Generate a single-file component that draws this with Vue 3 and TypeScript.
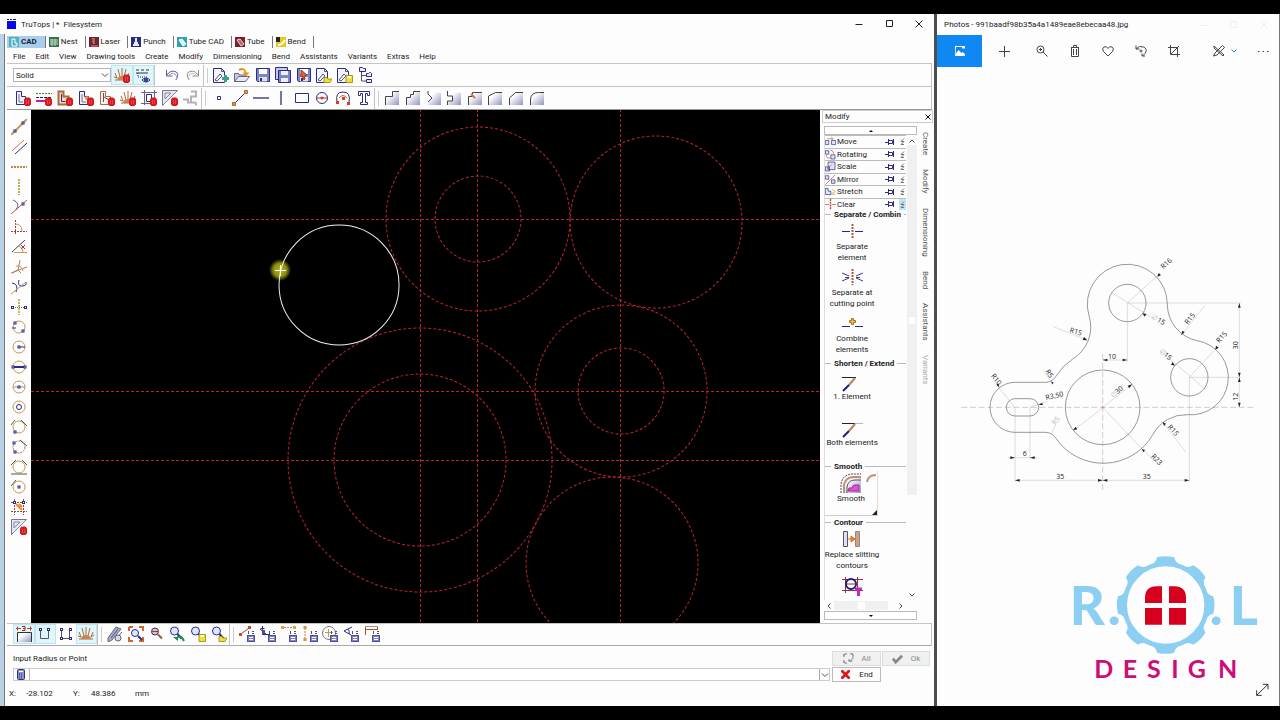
<script setup lang="ts">
import { ref } from 'vue'

interface Tool {
  id: string
  label: string
  on?: boolean
}

const NAVY = '#2c2c86'
const BROWN = '#b06a3c'
const GOLD = '#c89a50'

const bin =
  '<path d="M9.500 9.500l1-1.500h4l1 1.500v5l-1 1h-4l-1-1z" fill="#dc1a20" stroke="#c81c20"/><path d="M11.500 10v4M13.500 10v4" stroke="#e84448"/>'
const calc =
  '<path d="M9.500 5v3M13 5.500h2M13 7.500h2" stroke="#555"/><rect x="8.500" y="9.500" width="7" height="6" fill="#7c84cc" stroke="#4a4e9c"/><path d="M10 11.500h4M10 13.500h4" stroke="#fff"/>'
const sheet = '<path d="M.5 1.500h8l3 3v11H.5z" fill="#f4f6ff"/><path d="M8.500 1.500v3h3M2 13l5-6 2 2-5 5z" stroke="#556"/>'
const disk =
  '<path d="M1.500 1.500h13v13h-12l-1-1z" fill="#7d86c4"/><path d="M4 2h8v5H4z" fill="#fff" stroke="none"/><path d="M4 10h8v4.500H4z" fill="#dfe2f4" stroke="none"/><path d="M6 11v3" stroke-width="2"/>'
const sun =
  '<path d="M1 13h14M3 11L1 6M6 10L4 2M8 10V1M10 10l2-8M13 11l2-5M0 10l3 1M16 9l-3 2" stroke="#b06a3c"/><path d="M3 13a5 4 0 0 1 10 0z" fill="#c98355" stroke="none"/>'
const lens = '<circle cx="5.500" cy="5" r="4" fill="#dfe6ff"/><path d="M8.500 8l4 4.500" stroke-width="2"/>'
const yellowSave =
  '<path d="M9 8.500h6.500v7H9z" fill="#f0e030" stroke="#a89a18"/><path d="M10.500 9h3.500v2h-3.500z" fill="#fff" stroke="none"/>'
const yellowFolder = '<path d="M8 15.500v-5h3l1 1.500h4l-2 3.500z" fill="#f0e030" stroke="#a89a18"/>'
const profile = '<path d="M1.500 1.500h5v5h4v8h-9z" fill="#f2f2fa"/><path d="M4 4v8h4" stroke="#777"/>'
const ring = `<circle cx="8" cy="8" r="6" stroke="${GOLD}"/>`
const sq = (x: number, y: number) =>
  `<rect x="${x - 1}" y="${y - 1}" width="2" height="2" fill="#fff" stroke="${NAVY}"/>`
const chamfer = (d: string, close: string) =>
  `<path d="${d}${close}" fill="url(#plate)" stroke="none"/><path d="${d}" stroke="#444"/>`

const icons: Record<string, string> = {
  sunDel: sun + bin,
  sun,
  layers:
    '<path d="M1 3h3M6 3h3M11 3h3M1 6h12" stroke="#333"/><path d="M3 6v4h10" stroke-dasharray="1 1"/><path d="M7 13q4-4 8 0q-4 4-8 0z" fill="#fff"/><circle cx="11" cy="13" r="1.500" fill="#2c50b0"/>',
  undo: '<path d="M2.500 3v6h6M3 8q3-5 8-3.500t1 8.500" stroke="#5a5a9c"/><path d="M5 8q3-3 6-1t1 6" stroke="#9a9ac4"/>',
  redo: '<path d="M13.500 3v6h-6M13 8q-3-5-8-3.500t-1 8.500" stroke="#8c8c94"/><path d="M11 8q-3-3-6-1t-1 6" stroke="#c0c0c8"/>',
  newDoc: sheet + '<path d="M12.500 8v7M9 11.500h7" stroke="#38a08c" stroke-width="3"/>',
  openDoc:
    '<path d="M.5 14.500v-8h4l1 1.500h6v6.500z" fill="#c4cbe8" stroke="#667"/><path d="M.5 14.500l4-5h11l-4 5z" fill="#e4e8f8" stroke="#667"/><path d="M5 3q6-3 7 4" stroke="#e8941c" stroke-width="2"/><path d="M8.500 5.500h7L12 9.500z" fill="#e8941c" stroke="none"/>',
  save: disk,
  saveAll:
    '<path d="M3 12.500H.5v-12h12V3" fill="#c4c9e8"/><path d="M3.500 3.500h12v12h-12z" fill="#7d86c4"/><path d="M6 4h7v4H6zM6 11h7v4H6z" fill="#eef" stroke="none"/>',
  savePick: disk + '<path d="M5 3l6 5-3 1 1 3-1 1-2-4-1 1z" fill="#e06030" stroke="#a03c18"/>',
  docOpen: sheet + yellowFolder,
  docSave: sheet + yellowSave,
  tree: '<path d="M3.500 5v9h5M3.500 8.500h5" stroke="#555"/><path d="M1.500.500h3l1 1h2v3h-6zM8.500 6.500h2l1-1h1l1 1v3h-5zM8.500 12.500h5v3h-5z" fill="#e8ecff"/>',
  delContour: profile + bin,
  delLines:
    '<path d="M0 3.500h16" stroke="#2e8c3c" stroke-dasharray="2 1"/><path d="M0 7.500h16" stroke="#222" stroke-dasharray="3 1"/><path d="M0 11h9" stroke="#c020a0" stroke-width="2"/>' + bin,
  delPart: '<path d="M1.500 1.500h5v5h5v8h-10z" fill="#ecdccc" stroke="#b06a3c" stroke-width="2"/><path d="M4.500 4v7.500h4"/>' + bin,
  delHole: profile + '<circle cx="9" cy="8" r="2" fill="#e0905c" stroke="none"/>' + bin,
  delBend: '<path d="M1.500 1.500h5v5h5v8h-10z" fill="#f2f2fa" stroke="#b06a3c"/><path d="M4.500 3v9M5 7l5 3" stroke="#884430"/>' + bin,
  delBox: '<path d="M3.500 0v15M13.500 0v15M0 2.500h16M0 13.500h14" stroke="#667"/><path d="M5.500 4.500h5v7h-5z"/>' + bin,
  delGeo: '<path d="M.5.500h15L.5 15.500z" fill="#e6e8f4" stroke="#778"/><path d="M3 3h6L3 9zM2 14L14 2" stroke="#889"/>' + bin,
  grayPath: '<path d="M8 1.500h5v5H8v6h5M0 9.500h5v3h3M13 12.500v3" stroke="#b4b4b4" stroke-width="2"/>',
  point: '<path d="M6.500 6.500h3v3h-3z"/>',
  line: '<path d="M2 14L14 2"/><path d="M.5 12.500h3v3h-3zM12.500.500h3v3h-3z" fill="#e8943c" stroke="#b06a3c"/>',
  hline: '<path d="M0 8h16" stroke="#7474a8" stroke-width="2"/>',
  vline: '<path d="M8 1v14" stroke="#7474a8" stroke-width="2"/>',
  rect: '<path d="M1.500 3.500h13v9h-13z"/>',
  circle: '<circle cx="8" cy="8" r="5.500"/><path d="M2 8h12" stroke="#a03c3c"/><circle cx="8" cy="8" r="1.500" fill="#d04020" stroke="none"/>',
  arc: '<path d="M2 12Q0 2 8 2t6 10" /><path d="M4 8q4-5 8 0" stroke="#c06a3c"/><path d="M7 7h3v3H7zM1 11h3v3H1zM12 12h3v3h-3z" fill="#d8401c" stroke="none"/>',
  text: '<path d="M2.500 5.500v-4h11v4h-2v-2h-2v9h2v2h-7v-2h2v-9h-2v2z" fill="#fff"/>',
  ch1: chamfer('M1.500 15V6.500h7v-5H15', 'V15z'),
  ch2: chamfer('M1.500 15V7.500h4v-3h3v-3H15', 'V15z'),
  ch3: chamfer('M2 1v3l4 4-4 4', 'L2 15h13V3z'),
  ch4: chamfer('M1.500 1v5h5v5h-5v4', 'H15V3z'),
  ch5: chamfer('M1.500 15V6.500h4v-4H15', 'V15z') + '<path d="M4 4l4 4" stroke="#e07050" stroke-width="2"/>',
  ch6: chamfer('M1.500 15V6l7-3.500H15', 'V15z'),
  ch7: chamfer('M1.500 15V8l6-5.500H15', 'V15z'),
  ch8: chamfer('M1.500 15V10q0-7.500 8-7.500H15', 'V15z'),
  aLine: `<path d="M0 16L16 0" stroke="${GOLD}" stroke-width="2"/>` + sq(4, 12) + sq(12, 4),
  aPar: '<path d="M1 12L13 1" stroke="#d86a4c"/><path d="M4 15L16 4"/>',
  aH: '<path d="M0 8h16" stroke="#c08840" stroke-width="2" stroke-dasharray="2 1"/>',
  aV: '<path d="M8 0v16" stroke="#c8a850" stroke-width="2" stroke-dasharray="2 1"/>',
  aTan: '<path d="M2 1q8 3 3 10" stroke="#667"/><path d="M0 15L16 1" stroke="#d05038"/>' + sq(12, 5),
  aPerp: '<path d="M4.500 1v15M0 12.500h16" stroke="#a03c3c" stroke-dasharray="2 1"/><path d="M4 5q7 0 7 7" stroke="#c89a50"/>',
  aAng: '<path d="M1 13L14 1" stroke="#446"/><path d="M3 13.500h13M8 7q4 2 4 6" stroke="#c89a50"/><path d="M10 6l4 4M14 6l-4 4" stroke="#c03020"/>',
  aAng2: '<path d="M1 14l6-3 2-10M7 11l3 3" stroke="#888"/><path d="M0 14l16-6" stroke="#c8783c"/><path d="M5 7q6 0 7 5" stroke="#c89a50"/>',
  aTwo: '<path d="M1 4q7 1 4 9M8 1q-2 6 3 6t4-4"/><path d="M0 15L15 3" stroke="#b09a48"/>',
  aMid: '<path d="M8 0v16" stroke="#c8b450" stroke-width="2" stroke-dasharray="2 1"/><path d="M2 8.500h12" stroke="#666" stroke-dasharray="1 1"/>' + sq(1.5, 8.5) + sq(14.5, 8.5),
  c3: ring + sq(4, 4) + sq(12, 12) + '<path d="M1 9h4"/>',
  cRad: ring + '<path d="M8 8h6"/>' + sq(8, 8),
  cDia: ring + '<path d="M2 8h12" stroke-width="2"/>' + sq(2, 8) + sq(14, 8),
  cCen: ring + '<path d="M2 8h12" stroke="#999"/>' + sq(8, 8),
  cCon: ring + '<circle cx="8" cy="8" r="2.500"/>',
  cT1: ring + '<path d="M0 6l4-5M10 1l6 6" stroke="#555"/>' + sq(4, 13),
  cT2: `<circle cx="8" cy="8" r="6" stroke="${BROWN}" stroke-dasharray="2 1"/><path d="M9 1l7 6" stroke="#555"/>` + sq(3, 4) + sq(4, 13),
  cT3: ring + '<path d="M0 6l5-5M11 1l5 5M0 15h16" stroke="#555"/>',
  cT4: ring + '<path d="M0 7l5-6" stroke="#555"/>' + sq(8, 8),
  grid: '<path d="M3.500 0v16M12.500 0v16M0 3.500h16M0 12.500h16" stroke-dasharray="2 1" stroke="#a04840"/><path d="M5 5l6 6M8 5l3 3" stroke="#e09030" stroke-width="2"/>' + sq(3.5, 3.5) + sq(12.5, 3.5),
  dim3: '<path d="M2 7h13v9H2z" fill="url(#plate)" stroke="none"/><path d="M0 2.500h5M11 2.500h5M1.500.500v4M14.500.500v4" stroke="#c04030"/><path d="M6 .500h3v4H6M7 2.500h2" stroke="#a02818"/><path d="M1.500 16V6.500h14V16" stroke="#333"/>',
  snapU: '<path d="M3.500 4v8.500h8V4" stroke="#556"/>' + sq(3.5, 3.5) + sq(11.5, 3.5),
  snapBox: '<path d="M3.500 3.500v9h8v-9" stroke="#556"/>' + sq(3.5, 3.5) + sq(12.5, 3.5) + sq(3.5, 12.5) + sq(12.5, 12.5),
  pen: '<path d="M1 12L9 1l5 2-9 11-4 2z" fill="#a8aeca" stroke="#667"/><path d="M4 12l7-9M8 14l7-8" stroke="#557"/><circle cx="11" cy="12" r="3" fill="#d4d8e8" stroke="#667"/>',
  zoomFit: '<path d="M1 1h4M1 1v4M11 1h4v4M1 11v4h4M15 11v4h-4" stroke="#c86a30" stroke-width="2"/><circle cx="7" cy="7" r="3.500" fill="#dfe6ff"/><path d="M10 10l4 4" stroke-width="2"/>',
  zoomRed: '<circle cx="6" cy="5.500" r="3.500" fill="#e8c0a8"/><path d="M3 5.500h6" stroke="#a03c3c"/><path d="M9 8.500l4 4" stroke="#a05838" stroke-width="2"/>',
  zoomBack: lens + '<path d="M7 13q4-6 8 2" stroke="#1c8c4c" stroke-width="2"/><path d="M4 11h5v4z" fill="#1c8c4c" stroke="none"/>',
  zoomSave: lens + yellowSave,
  zoomOpen: lens + yellowFolder,
  mLine: '<path d="M2 8l8-6" stroke="#a04030"/><path d="M0 7h3v3H0zM9 0h3v3H9z" fill="#c84c2c" stroke="none"/>' + calc,
  mAxis: '<path d="M2.500 0v8.500H10M0 3l6 5M.5 2.500h4"/><path d="M2 4h3v4H2z" fill="#4c4c9c" stroke="none"/>' + calc,
  mH: '<path d="M3 1.500h9" stroke="#c87850" stroke-dasharray="2 1"/><path d="M0 0h3v3H0zM12 0h3v3h-3z" fill="#e0a040" stroke="none"/>' + calc,
  mV: '<path d="M3 2v12" stroke="#c87850" stroke-dasharray="2 1"/><path d="M1.500 0h3v3h-3zM1.500 12h3v3h-3z" fill="#e09040" stroke="none"/>' + calc,
  mCir: '<circle cx="7" cy="7" r="6.500" stroke="#777"/><path d="M3 6.500h8M6.500 3v8" stroke="#b8a048"/>' + calc,
  mAng: '<path d="M9 1L1 5l7 4M5 3q2 2 1 5"/>' + calc,
  mDist: '<path d="M1.500 0v9M13.500 0v4M1 3.500h12" stroke="#b05030"/><path d="M1 .500h13" stroke="#999"/>' + calc,
  move: '<path d="M.5 6.500h5v6h-5zM9.500 6.500h6v6h-6z" fill="#dfe4fa"/><path d="M3 4h8M9 2l3 2-3 2" stroke="#c87030"/>',
  rotate: '<path d="M.5 2.500h5v5h-5zM8.500 8.500h6v6h-6z" fill="#dfe4fa"/><path d="M8 2q5 0 4 5M2 9q0 5 5 4" stroke="#c04828"/>',
  scale: '<path d="M.5 8.500h6v6h-6zM4.500 1.500h10v11h-10z" fill="#dfe4fa"/><path d="M3 12l7-7" stroke="#c04828"/>',
  mirror: '<path d="M.5 2.500h5v5h-5zM9.500 8.500h5v5h-5z" fill="#dfe4fa"/><path d="M1 15L15 1" stroke="#c04828"/>',
  stretch: '<path d="M.5 3.500h4v4h4v5h-8z" fill="#dfe4fa"/><path d="M10 5l5 3-5 3M9 12h6" stroke="#e09030"/>',
  clear: '<path d="M8 0v16" stroke="#b05030" stroke-dasharray="3 1" stroke-width="2"/><path d="M0 8h6M10 8h6" stroke="#b05030"/>'
}

const panelIcons: Record<string, string> = {
  separate:
    '<path d="M0 8.500h8M13 8.500h8" stroke="#2424a0"/><path d="M10.500 1v15" stroke="#b05838" stroke-width="2" stroke-dasharray="2 1"/>',
  cutting:
    '<path d="M0 4l7 3M7 9l-7 3M21 4l-7 3M14 9l7 3M3 8.500h4M14 8.500h4" stroke="#3c3c90"/><path d="M10.500 0v16" stroke="#b05838" stroke-width="2" stroke-dasharray="2 1"/>',
  combine:
    '<path d="M0 11.500h8M13 11.500h8" stroke="#2424a0"/><path d="M9.500 3.500h2v2h2v2h-2v2h-2v-2h-2v-2h2z" fill="#f8b848" stroke="#a87020"/>',
  oneEl: '<path d="M0 1.500h14" stroke="#222"/><path d="M13 2L7 9" stroke="#c08058" stroke-width="2"/><path d="M7 9l-6 6" stroke="#1c1c80" stroke-width="2"/>',
  bothEl:
    '<path d="M0 1.500h14" stroke="#222"/><path d="M13 1.500h8" stroke="#b4b8d8"/><path d="M13 2L7 9" stroke="#c08058" stroke-width="2"/><path d="M7 9l-6 6" stroke="#1c1c80" stroke-width="2"/>',
  replace:
    '<path d="M1.500.500h4v15h-4z" fill="#dfe2f4" stroke="#556"/><path d="M13.500.500h4v15h-4z" fill="#d8a070" stroke="#889"/><path d="M6 8h5M9 5l4 3-4 3z" fill="#e88838" stroke="#d07028"/>',
  slot: '<path d="M0 2.500h21M0 13.500h21M3.500 0v16M15.500 0v16" stroke="#903040"/><circle cx="9" cy="7" r="5" fill="#fff" stroke="#1c1c70" stroke-width="2"/><path d="M4 7h10" stroke="#903040"/><path d="M13 12h7M16.500 12v7" stroke="#c828b8" stroke-width="3"/>'
}

const modules = [
  { name: 'CAD', color: '#4cb4c0', art: '<path d="M3 2v7h5M3 2h3v4h2v3" stroke="#fff"/>' },
  { name: 'Nest', color: '#3c7048', art: '<path d="M1 3h8M1 5h8M1 7h8M3 2v7M6 2v7" stroke="#b8dcc0"/>' },
  { name: 'Laser', color: '#6c2830', art: '<path d="M4 1v4l1 2V1M2 9h7" stroke="#f08078"/>' },
  { name: 'Punch', color: '#24307c', art: '<path d="M5 1v5M2 8h6M3 6h4" stroke="#e4e8ff" stroke-width="2"/>' },
  { name: 'Tube CAD', color: '#2ca4b0', art: '<path d="M2 3l3-1 4 5-3 2z" fill="#d8f4f4" stroke="#fff"/>' },
  { name: 'Tube', color: '#742430', art: '<path d="M2 3l3-1 4 5-3 2z" fill="#c86060" stroke="#f4d0d0"/>' },
  { name: 'Bend', color: '#e8c820', art: '<path d="M0 0h4v5H0z" fill="#222" stroke="none"/><path d="M2 8q4 0 7-5" stroke="#fff" stroke-width="2"/>' }
]
const menus = ['File', 'Edit', 'View', 'Drawing tools', 'Create', 'Modify', 'Dimensioning', 'Bend', 'Assistants', 'Variants', 'Extras', 'Help']

const make = (pairs: string): Tool[] =>
  pairs.split(',').map((p) => {
    const [id, label, on] = p.split(':')
    return { id, label, on: on === 'on' }
  })

const fileTools = make('newDoc:New,openDoc:Open,save:Save,saveAll:Save all,savePick:Save selection,docOpen:Load template,docSave:Save template,tree:Structure')
const historyTools = make('undo:Undo,redo:Redo')
const deleteTools = make('delContour:Delete contour,delLines:Delete lines,delPart:Delete part,delHole:Delete hole,delBend:Delete bend,sunDel:Delete helpers,delBox:Delete box,delGeo:Delete geometry,grayPath:Path')
const drawTools = make('point:Point,line:Line,hline:Horizontal,vline:Vertical,rect:Rectangle,circle:Circle,arc:Arc,text:Text')
const cornerTools = make('ch1:Notch 1,ch2:Notch 2,ch3:Notch 3,ch4:Notch 4,ch5:Notch 5,ch6:Slope,ch7:Chamfer,ch8:Fillet')
const sideTools = make('aLine:Two points,aPar:Parallel,aH:Horizontal,aV:Vertical,aTan:Tangent,aPerp:Perpendicular,aAng:Angle,aAng2:Bisector,aTwo:Two tangents,aMid:Midline,c3:Three points,cRad:Radius,cDia:Diameter,cCen:Centre,cCon:Concentric,cT1:Tangent one,cT2:Tangent points,cT3:Tangent three,cT4:Tangent centre,grid:Grid,delGeo:Delete')
const snapTools = make('dim3:Dimension:on,snapU:Open snap:on,snapBox:Closed snap,sun:Helpers:on')
const zoomTools = make('pen:Redraw,zoomFit:Zoom all,zoomRed:Zoom window,zoomBack:Zoom back,zoomSave:Save zoom,zoomOpen:Load zoom')
const measureTools = make('mLine:Distance,mAxis:Axis,mH:Horizontal,mV:Vertical,mCir:Circle,mAng:Angle,mDist:Spacing')

const sections = [
  { id: 'move', name: 'Move' },
  { id: 'rotate', name: 'Rotating' },
  { id: 'scale', name: 'Scale' },
  { id: 'mirror', name: 'Mirror' },
  { id: 'stretch', name: 'Stretch' },
  { id: 'clear', name: 'Clear' }
]
const sideTabs = ['Create', 'Modify', 'Dimensioning', 'Bend', 'Assistants', 'Variants']

const guides = [
  [478, 219, 92], [478, 219, 43], [656, 222, 86], [621, 391, 86],
  [621, 391, 43], [420, 460, 132], [420, 460, 86], [612, 563, 86]
]
const teeth = [0, 45, 90, 135, 180, 225, 270, 315]
const lineStyle = ref('Solid')
const command = ref('')
</script>

<template>
  <div class="desktop">
    <svg class="defs" width="0" height="0" aria-hidden="true">
      <defs>
        <linearGradient id="plate" x1="0" y1="0" x2="1" y2="1">
          <stop offset="0.3" stop-color="#fff" />
          <stop offset="1" stop-color="#9094c0" />
        </linearGradient>
      </defs>
    </svg>

    <main class="cad">
      <header class="titlebar">
        <svg class="applogo" viewBox="0 0 9 10"><path d="M0 .5h2M3 .5h2M6 .5h3" stroke="#222" /><rect y="2" width="9" height="8" fill="#0808e8" /></svg>
        <span>TruTops | *&nbsp; Filesystem</span>
        <div class="winbtns">
          <button aria-label="Minimize"><svg viewBox="0 0 8 8"><path d="M.5 4.500h7" /></svg></button>
          <button aria-label="Maximize"><svg viewBox="0 0 8 8"><path d="M1.500.500h6v6h-6z" /></svg></button>
          <button aria-label="Close"><svg viewBox="0 0 8 8"><path d="M.5.500l7 7M7.500.500l-7 7" /></svg></button>
        </div>
      </header>

      <div class="client">
        <nav class="modules">
          <button v-for="(m, i) in modules" :key="m.name" :class="{ active: i === 0 }">
            <svg viewBox="0 0 10 10"><rect width="10" height="10" :fill="m.color" /><g fill="none" v-html="m.art" /></svg>
            <span>{{ m.name }}</span>
          </button>
        </nav>
        <nav class="menus">
          <button v-for="m in menus" :key="m">{{ m }}</button>
        </nav>

        <div class="toolbar">
          <div class="style-box">
            <select v-model="lineStyle" aria-label="Line style"><option>Solid</option></select>
            <svg viewBox="0 0 8 8"><path d="M1 2.500l3 3 3-3" /></svg>
          </div>
          <div class="group two">
            <button class="tool on" aria-label="Helpers"><svg class="ico" viewBox="0 0 16 16" v-html="icons.sunDel" /></button>
            <button class="tool on" aria-label="Layers"><svg class="ico" viewBox="0 0 16 16" v-html="icons.layers" /></button>
          </div>
          <div class="group two history">
            <button v-for="t in historyTools" :key="t.id" class="tool" :aria-label="t.label"><svg class="ico" viewBox="0 0 16 16" v-html="icons[t.id]" /></button>
          </div>
          <div class="group eight grip">
            <button v-for="t in fileTools" :key="t.id" class="tool" :aria-label="t.label"><svg class="ico" viewBox="0 0 16 16" v-html="icons[t.id]" /></button>
          </div>
        </div>

        <div class="toolbar second">
          <div class="group nine">
            <button v-for="t in deleteTools" :key="t.id" class="tool" :aria-label="t.label"><svg class="ico" viewBox="0 0 16 16" v-html="icons[t.id]" /></button>
          </div>
          <div class="group eight grip">
            <button v-for="t in drawTools" :key="t.id" class="tool" :aria-label="t.label"><svg class="ico" viewBox="0 0 16 16" v-html="icons[t.id]" /></button>
          </div>
          <div class="group eight grip">
            <button v-for="t in cornerTools" :key="t.id" class="tool" :aria-label="t.label"><svg class="ico" viewBox="0 0 16 16" v-html="icons[t.id]" /></button>
          </div>
        </div>

        <section class="work">
          <div class="sidebar">
            <button v-for="t in sideTools" :key="t.id" class="tool" :aria-label="t.label"><svg class="ico" viewBox="0 0 16 16" v-html="icons[t.id]" /></button>
          </div>

          <svg class="canvas" viewBox="31 110 789 513" preserveAspectRatio="xMinYMin slice">
            <defs>
              <radialGradient id="glow"><stop offset="0" stop-color="#b8b820" /><stop offset="0.6" stop-color="#8c8c10" /><stop offset="1" stop-color="#000" /></radialGradient>
            </defs>
            <g class="guide">
              <path d="M31 219.500H2000M31 391.500H2000M31 460.500H2000M420.500 109V2000M477.500 109V2000M620.500 109V2000" />
              <circle v-for="(g, i) in guides" :key="i" :cx="g[0]" :cy="g[1]" :r="g[2]" />
            </g>
            <circle cx="280" cy="270" r="11" fill="url(#glow)" />
            <circle cx="339" cy="285" r="60" fill="none" stroke="#f0f0f0" />
            <path d="M280.500 265v11M275 270.500h11" stroke="#fff" />
          </svg>

          <aside class="dock">
            <div class="dock-title"><span>Modify</span><button aria-label="Close panel"><svg viewBox="0 0 8 8"><path d="M1.500 1.500l5 5M6.500 1.500l-5 5" /></svg></button></div>
            <div class="dock-body">
              <div class="dock-main">
                <button class="step" aria-label="Scroll up"><svg viewBox="0 0 6 4"><path d="M1 3l2-2 2 2z" /></svg></button>
                <div class="dock-mid">
                  <div class="dock-view">
                    <div class="list">
                      <div class="sections">
                        <div v-for="(s, i) in sections" :key="s.id" class="section">
                          <svg class="mini" viewBox="0 0 16 16" v-html="icons[s.id]" />
                          <button class="name">{{ s.name }}</button>
                          <svg class="pin" viewBox="0 0 10 8"><path d="M0 4.500h3M3.500 1v6M3.500 2.500h4v3h-4M8.500 1v6" /></svg>
                          <svg class="fold" :class="{ open: i === 5 }" viewBox="0 0 7 10"><path d="M5 2L2 5h3M5 5L2 8h3" /></svg>
                        </div>
                      </div>
                      <h3>Separate / Combin</h3>
                      <button class="item"><svg viewBox="0 0 21 16" v-html="panelIcons.separate" /><span>Separate<br />element</span></button>
                      <button class="item"><svg viewBox="0 0 21 16" v-html="panelIcons.cutting" /><span>Separate at<br />cutting point</span></button>
                      <button class="item"><svg viewBox="0 0 21 16" v-html="panelIcons.combine" /><span>Combine<br />elements</span></button>
                      <h3 class="next">Shorten / Extend</h3>
                      <button class="item single"><svg viewBox="0 0 21 16" v-html="panelIcons.oneEl" /><span>1. Element</span></button>
                      <button class="item single"><svg viewBox="0 0 21 16" v-html="panelIcons.bothEl" /><span>Both elements</span></button>
                      <h3 class="next">Smooth</h3>
                      <button class="item smooth">
                        <svg viewBox="0 0 40 20">
                          <path d="M4 20V13Q5 3 15 3h7v17z" fill="url(#plate)" />
                          <path d="M2 20V11Q4 1 14 1h8" stroke="#445" stroke-dasharray="2 1" />
                          <path d="M5 20V13Q6 4 15 4h7" stroke="#c09070" stroke-width="2" />
                          <path d="M8 20V14Q9 7 16 7h6" stroke="#556" />
                          <path d="M9 18l1-3h3q1-4 4-3h3v6z" fill="#e050d0" stroke="#a828a0" />
                          <path d="M28 9Q29 2 37 2" stroke="#c09070" stroke-width="2" />
                        </svg>
                        <span>Smooth</span>
                        <i class="corner"></i>
                      </button>
                      <h3 class="next">Contour</h3>
                      <button class="item"><svg viewBox="0 0 21 16" v-html="panelIcons.replace" /><span>Replace slitting<br />contours</span></button>
                      <button class="item" aria-label="Contour slot"><svg class="tall" viewBox="0 0 21 19" v-html="panelIcons.slot" /></button>
                    </div>
                    <div class="hbar">
                      <svg viewBox="0 0 6 8"><path d="M4.500 1.500L2 4l2.500 2.500" /></svg>
                      <div class="htrack"><i></i></div>
                      <svg viewBox="0 0 6 8"><path d="M1.500 1.500L4 4 1.500 6.500" /></svg>
                    </div>
                  </div>
                  <div class="vbar">
                    <svg viewBox="0 0 8 8"><path d="M1.500 5.500L4 3l2.500 2.500" /></svg>
                    <div class="vtrack"><i></i></div>
                    <svg class="down" viewBox="0 0 8 8"><path d="M1.500 2.500L4 5l2.500-2.500" /></svg>
                  </div>
                </div>
                <button class="step" aria-label="Scroll down"><svg viewBox="0 0 6 4"><path d="M1 1l2 2 2-2z" /></svg></button>
              </div>
              <nav class="vtabs"><button v-for="t in sideTabs" :key="t">{{ t }}</button></nav>
            </div>
          </aside>
        </section>

        <div class="toolbar bottom">
          <div class="group four">
            <button v-for="t in snapTools" :key="t.id" class="tool" :class="{ on: t.on }" :aria-label="t.label"><svg class="ico" viewBox="0 0 16 16" v-html="icons[t.id]" /></button>
          </div>
          <div class="group six grip">
            <button v-for="t in zoomTools" :key="t.id" class="tool" :aria-label="t.label"><svg class="ico" viewBox="0 0 16 16" v-html="icons[t.id]" /></button>
          </div>
          <div class="group seven grip">
            <button v-for="t in measureTools" :key="t.id" class="tool" :aria-label="t.label"><svg class="ico" viewBox="0 0 16 16" v-html="icons[t.id]" /></button>
          </div>
        </div>

        <form class="prompt" @submit.prevent>
          <div class="entry">
            <label for="command">Input Radius or Point</label>
            <div class="field">
              <svg class="calc" viewBox="0 0 8 11"><rect x="0.500" y="0.500" width="7" height="10" rx="1" fill="#8c90cc" stroke="#34346c" /><path d="M2 2.500h4" stroke="#fff" /><path d="M2 5h4M2 7h4M2 9h4" stroke="#34346c" stroke-dasharray="1 1" /></svg>
              <input id="command" v-model="command" type="text" />
              <button type="button" aria-label="History"><svg viewBox="0 0 8 8"><path d="M1 2.500l3 3 3-3" /></svg></button>
            </div>
          </div>
          <div class="actions">
            <button type="button" disabled>
              <svg viewBox="0 0 12 12"><path d="M1 4V1h3M1 8v3h3M8 1h3v3M6 7l2 3 3-5" stroke="#999" stroke-width="2" stroke-dasharray="3 1" /></svg>All
            </button>
            <button type="button" disabled>
              <svg viewBox="0 0 12 12"><path d="M1 6l3 4 7-7" stroke="#888" stroke-width="3" /></svg>Ok
            </button>
            <button type="button">
              <svg viewBox="0 0 12 12"><path d="M2.500 2.500l7 7M9.500 2.500l-7 7" stroke="#d81818" stroke-width="3" stroke-linecap="round" /></svg>End
            </button>
          </div>
        </form>
        <footer class="status"><span class="lab">X:</span><span class="val">-28.102</span><span class="lab">Y:</span><span class="val">48.386</span><span>mm</span></footer>
      </div>
    </main>

    <aside class="photos">
      <header class="photo-title">
        <span>Photos - 991baadf98b35a4a1489eae8ebecaa48.jpg</span>
        <div class="winbtns faint">
          <button aria-label="Minimize"><svg viewBox="0 0 8 8"><path d="M.5 4.500h7" /></svg></button>
          <button aria-label="Maximize"><svg viewBox="0 0 8 8"><path d="M.5.500h6v6h-6z" /></svg></button>
          <button aria-label="Close"><svg viewBox="0 0 8 8"><path d="M.5.500l7 7M7.500.500l-7 7" /></svg></button>
        </div>
      </header>
      <div class="photo-tools">
        <button class="see" aria-label="See all photos">
          <svg viewBox="0 0 12 12"><path d="M1 1h10v10H1z" fill="#fff" /><path d="M1.500 9l3-4 3 3 1-1 2.500 2V3.500h-3V2H2z" fill="#1084e8" /></svg>
        </button>
        <button class="plus" aria-label="Add"><svg viewBox="0 0 14 14"><path d="M6.500 2v11M1 7.500h11" /></svg></button>
        <button aria-label="Zoom"><svg viewBox="0 0 14 14"><circle cx="5.500" cy="5.500" r="3.500" /><path d="M8 8l4.500 4.500M4 5.500h3M5.500 4v3" /></svg></button>
        <button aria-label="Delete"><svg viewBox="0 0 14 14"><path d="M3 3.500h8M3.500 3.500v9h7v-9M5.500 3V1.500h3V3M5.500 5v6M8.500 5v6" /></svg></button>
        <button aria-label="Favourite"><svg viewBox="0 0 14 14"><path d="M7 12L2.500 7.500Q.5 4.500 3 3t4 1.500Q8.500 1.500 11 3t.5 4.500z" /></svg></button>
        <button aria-label="Rotate"><svg viewBox="0 0 14 14"><path d="M2 5Q5 1 9.500 3T11 9.500L8.500 12M2 1.500V5h3.500M8 9.500V12h3" /><circle cx="7" cy="7" r="1" /></svg></button>
        <button aria-label="Crop"><svg viewBox="0 0 14 14"><path d="M3.500 1v9.500H13M1 3.500h9.500V13M4 10l8-8" /></svg></button>
        <button class="edit" aria-label="Edit and create"><svg viewBox="0 0 14 14"><path d="M2 2l10 9-1 1L2 4zM10.500 1.500L3 9l-1.500 3L5 11l7.500-7.500z" /></svg></button>
        <svg class="drop" viewBox="0 0 6 6"><path d="M.5 1.500L3 4l2.500-2.500" /></svg>
        <button class="more" aria-label="More"><svg viewBox="0 0 14 14"><path d="M2 7.500h1.500M6.500 7.500H8M11 7.500h1.500" /></svg></button>
      </div>

      <div class="photo-view">
        <svg class="plan" viewBox="-3 0 990 750">
          <g class="thin">
            <path d="M532 159H872M532 159V335M718 382H872M718 382V696M195 472V696M240 472V628M458 472L576 597" />
            <path d="M34 472H918M458 312V728" class="axis" />
            <path d="M485 128L612 207M532 159L630 70M310 230L412 271M764 167L694 255M718 382L806 286M630 302L766 418M145 412L195 472M240 472L290 454M707 606L638 516M280 360L308 404M372 541L546 403M576 597L612 632M306 548L318 520" />
            <path d="M458 330H532M174 623H262M195 691H718M868 159V472" />
          </g>
          <g class="outline">
            <path d="M417 197A120 120 0 1 1 652 163A112 112 0 0 0 741 272A112 112 0 0 1 712 494A112 112 0 0 0 609 553A172 172 0 0 1 317 564A37 37 0 0 0 286 547H195A75 75 0 0 1 195 397H286A37 37 0 0 0 317 380A172 172 0 0 1 368 327A112 112 0 0 0 417 197Z" />
            <circle cx="532" cy="159" r="56" />
            <circle cx="718" cy="382" r="56" />
            <circle cx="458" cy="472" r="112" />
            <rect x="169" y="446" width="97" height="52" rx="26" />
          </g>
          <path class="arrows" d="M458 330l14-4v8zM532 330l-14-4v8zM195 623l-14-4v8zM240 623l14-4v8zM195 691l14-4v8zM458 691l-14-4v8zM458 691l14-4v8zM718 691l-14-4v8zM868 159l-4 14h8zM868 382l-4-14h8zM868 382l-4 14h8zM868 472l-4-14h8zM412 271l-14-1 4-9zM622 80l4-11 7 7zM577 190l12 2-5 8zM694 255l3-13 7 5zM796 299l2-12 8 6zM675 347l-12-3 5-8zM148 412l-9-7 6-5zM266 465l10-7 3 7zM638 516l10 5-6 7zM576 597l9 3-5 7zM546 403l-13 4 5 8zM369 541l13-3-5-8zM303 394l4 9 4-5z" />
          <g class="labels">
            <text x="474" y="326">10</text>
            <text x="218" y="619">6</text>
            <text x="319" y="688">35</text>
            <text x="578" y="688">35</text>
            <text transform="translate(864 298) rotate(-90)">30</text>
            <text transform="translate(864 452) rotate(-90)">12</text>
            <text transform="translate(640 58) rotate(-42)">R16</text>
            <text transform="translate(604 205) rotate(30)"><tspan class="pale">∅</tspan>15</text>
            <text transform="translate(358 246) rotate(18)">R15</text>
            <text transform="translate(713 225) rotate(-50)">R15</text>
            <text transform="translate(808 280) rotate(-48)">R15</text>
            <text transform="translate(626 305) rotate(40)"><tspan class="pale">∅</tspan>15</text>
            <text transform="translate(122 378) rotate(52)">R10</text>
            <text transform="translate(286 364) rotate(58)">R5</text>
            <text transform="translate(288 450) rotate(-12)">R3,50</text>
            <text transform="translate(488 444) rotate(-38)"><tspan class="pale">∅</tspan>30</text>
            <text class="pale" transform="translate(315 526) rotate(-52)">R5</text>
            <text transform="translate(652 532) rotate(48)">R15</text>
            <text transform="translate(602 620) rotate(46)">R23</text>
          </g>
          <circle cx="458" cy="472" r="3" fill="#d88080" />
        </svg>

        <svg class="brand" viewBox="0 0 690 498">
          <g fill="#8ccff2">
            <g transform="translate(350 195)">
              <circle r="123" fill="none" stroke="#8ccff2" stroke-width="14" />
              <path v-for="a in teeth" :key="a" :transform="`rotate(${a})`" d="M-48 -120Q-28 -126 -26 -143Q0 -150 26 -143Q28 -126 48 -120z" />
            </g>
            <text class="big" y="255" x="62 176">R.</text>
            <text class="big" y="255" x="482 542">.L</text>
          </g>
          <path fill="#d8001f" d="M288 189V174Q288 139 323 139H339V189zM360 139H376Q411 139 411 174V189H360zM288 204H339V254H288zM360 204H411V254H360z" />
          <text class="design" y="415" x="136 221 294 367 416 507">DESIGN</text>
          <path d="M623 466L657 433M642 433H657V448M623 451V466H638" fill="none" stroke="#333" stroke-width="3" />
        </svg>
      </div>
    </aside>
  </div>
</template>

<style>
html,
body {
  background: #000;
}
</style>

<style scoped>
* {
  box-sizing: border-box;
}
.desktop {
  display: flex;
  height: 100vh;
  padding: 14px 0;
  background: #000;
  color: #222;
  font: 8px/11px Roboto, 'Noto Sans', sans-serif;
}
.defs {
  position: absolute;
}
svg {
  display: block;
  flex: none;
}
button {
  display: flex;
  align-items: center;
  justify-content: center;
  margin: 0;
  padding: 0;
  border: 0;
  background: none;
  color: inherit;
  font: inherit;
}
.cad {
  display: flex;
  flex: 937 1 0;
  flex-direction: column;
  min-width: 0;
  border-right: 3px solid #4c4f52;
  background: #fdfdfd;
}
.titlebar {
  display: flex;
  align-items: center;
  height: 20px;
  padding-left: 7px;
}
.applogo {
  width: 9px;
  height: 10px;
  margin-right: 5px;
}
.winbtns {
  display: flex;
  margin-left: auto;
}
.winbtns button {
  width: 30px;
  height: 20px;
}
.winbtns svg {
  width: 8px;
  height: 8px;
  fill: none;
  stroke: #222;
}
.faint svg {
  stroke: #eee;
}
.client {
  display: flex;
  flex: 1;
  flex-direction: column;
  min-height: 0;
  border-left: 4px solid #b9d2e6;
  box-shadow: inset 1px 0 #777;
}
.modules {
  display: flex;
  align-items: center;
  height: 15px;
  padding-left: 3px;
}
.modules button {
  height: 12px;
  gap: 2px;
  padding: 0 7px 0 3px;
  border-right: 1px solid #777;
}
.modules .active {
  padding: 0 8px 0 2px;
  background: #a9cdf0;
  font-weight: 700;
}
.modules svg {
  width: 10px;
  height: 10px;
}
.menus {
  display: flex;
  gap: 10px;
  height: 14px;
  padding-left: 9px;
}
.toolbar {
  display: flex;
  align-items: center;
  height: 23px;
  margin: 0 2px 0 3px;
  padding-left: 6px;
  border-top: 1px solid #c4c4c4;
  border-right: 1px solid #c4c4c4;
}
.second {
  height: 24px;
  border-bottom: 1px solid #999;
}
.style-box {
  display: flex;
  position: relative;
  align-items: center;
  width: 98px;
  height: 14px;
  border: 1px solid #b4b4b4;
  background: #fff;
}
.style-box select {
  width: 100%;
  height: 12px;
  padding: 0 2px;
  border: 0;
  appearance: none;
  background: none;
  color: #222;
  font: inherit;
}
.style-box svg {
  position: absolute;
  right: 1px;
  width: 8px;
  height: 8px;
  fill: none;
  stroke: #555;
}
.group {
  display: flex;
  height: 21px;
}
.group + .group {
  padding-left: 7px;
  border-left: 1px solid #c4c4c4;
}
.grip {
  background: linear-gradient(#ccc, #ccc) 3px 3px / 1px 15px no-repeat;
}
.tool {
  flex: 1;
  height: 20px;
}
.on {
  border: 1px solid #bde6f2;
  background: #dff6fb;
}
.ico {
  width: 16px;
  height: 16px;
  fill: none;
  stroke: #2c2c86;
}
.two {
  width: 43px;
}
.two.history {
  width: 49px;
}
.four {
  width: 84px;
}
.six {
  width: 132px;
}
.seven {
  width: 153px;
}
.eight {
  width: 173px;
}
.nine {
  width: 188px;
}
.work {
  display: flex;
  flex: 1;
  min-height: 0;
}
.sidebar {
  display: flex;
  flex-direction: column;
  width: 27px;
  padding: 7px 0 0 2px;
}
.sidebar .tool {
  flex: 0 0 20px;
}
.canvas {
  flex: 1;
  min-width: 0;
  height: 100%;
  background: #000;
}
.guide {
  fill: none;
  stroke: #b8262c;
  stroke-dasharray: 3 2;
}
.dock {
  display: flex;
  flex-direction: column;
  width: 112px;
  margin-left: 2px;
  padding-right: 1px;
}
.dock-title {
  display: flex;
  align-items: center;
  justify-content: space-between;
  height: 13px;
  margin-bottom: 3px;
  padding-left: 2px;
  border: 1px solid #ccc;
}
.dock-title svg {
  width: 8px;
  height: 8px;
  fill: none;
  stroke: #111;
}
.dock-body {
  display: flex;
  flex: 1;
  min-height: 0;
  padding-bottom: 3px;
}
.dock-main {
  display: flex;
  flex: 1;
  flex-direction: column;
  min-width: 0;
  padding-left: 2px;
}
.step {
  flex: 0 0 9px;
  border: 1px solid #bbb;
  background: #fff;
}
.step svg {
  width: 6px;
  height: 4px;
}
.dock-mid {
  display: flex;
  flex: 1;
  min-height: 0;
}
.dock-view {
  display: flex;
  flex: 1;
  flex-direction: column;
  min-width: 0;
}
.list {
  flex: 1;
  min-height: 0;
  overflow: hidden;
  border-left: 1px solid #ddd;
}
.sections {
  display: grid;
  grid-template-rows: repeat(6, 1fr);
  height: 75px;
}
.section {
  display: flex;
  align-items: center;
  overflow: hidden;
  border-top: 1px solid #bbb;
}
.mini {
  width: 11px;
  height: 11px;
  margin-right: 1px;
  fill: none;
  stroke: #2c2c86;
}
.name {
  flex: 1;
  justify-content: flex-start;
}
.pin {
  width: 10px;
  height: 8px;
  margin-right: 4px;
  fill: none;
  stroke: #2c2c86;
}
.fold {
  width: 7px;
  height: 11px;
  fill: none;
  stroke: #777;
}
.fold.open {
  background: #bfe4f8;
}
h3 {
  display: flex;
  align-items: center;
  gap: 3px;
  height: 9px;
  margin: 0;
  font-size: 8px;
  font-weight: 700;
  line-height: 9px;
  white-space: nowrap;
}
h3::before {
  flex: none;
  width: 6px;
  height: 1px;
  background: #bbb;
  content: '';
}
h3::after {
  flex: 1;
  height: 1px;
  background: #bbb;
  content: '';
}
h3.next {
  margin-top: 2px;
}
.item {
  flex-direction: column;
  justify-content: flex-start;
  width: 54px;
  height: 46px;
  padding-top: 4px;
  white-space: nowrap;
}
.item svg {
  width: 21px;
  height: 16px;
  margin-bottom: 2px;
  fill: none;
}
.item svg.tall {
  height: 19px;
}
.item.single {
  padding-top: 8px;
}
.item.single svg {
  margin-bottom: -1px;
}
.item.smooth {
  position: relative;
  width: 53px;
  height: 45px;
  padding-top: 2px;
  border-right: 1px solid #ddd;
  border-bottom: 1px solid #ccc;
}
.item.smooth svg {
  width: 40px;
  height: 20px;
  margin: 0 0 0 16px;
}
.corner {
  position: absolute;
  right: 0;
  bottom: 0;
  border-bottom: 5px solid #222;
  border-left: 5px solid transparent;
}
.hbar {
  display: flex;
  align-items: center;
  justify-content: space-between;
  height: 11px;
  padding: 0 2px;
}
.hbar svg {
  width: 6px;
  height: 8px;
  fill: none;
  stroke: #444;
}
.htrack {
  display: flex;
  justify-content: center;
  width: 54px;
  height: 9px;
  margin-right: 8px;
  padding: 1px;
  background: #eff0f0;
}
.htrack i {
  width: 7px;
  background: #fff;
}
.vbar {
  display: flex;
  flex-direction: column;
  align-items: center;
  width: 11px;
  padding: 2px 0 12px;
}
.vbar svg {
  width: 8px;
  height: 8px;
  fill: none;
  stroke: #444;
}
.vtrack {
  display: flex;
  flex: 0 1 350px;
  align-items: center;
  justify-content: center;
  width: 10px;
  background: #eff0f0;
}
.vtrack i {
  width: 6px;
  height: 7px;
  background: #fff;
}
.down {
  margin-top: auto;
}
.vtabs {
  display: flex;
  flex-direction: column;
  gap: 14px;
  width: 16px;
  padding-top: 6px;
}
.vtabs button {
  width: 16px;
  color: #555;
  writing-mode: vertical-rl;
}
.vtabs button:last-child {
  color: #aaa;
}
.bottom {
  border-bottom: 1px solid #aaa;
}
.prompt {
  display: flex;
  gap: 2px;
  height: 37px;
  padding: 5px 4px 0 9px;
}
.entry {
  flex: 1;
  min-width: 0;
}
.entry label {
  display: block;
  height: 17px;
  line-height: 15px;
}
.field {
  display: flex;
  height: 13px;
  border: 1px solid #ccc;
}
.calc {
  width: 8px;
  height: 11px;
  margin: 0 4px 0 3px;
}
.field input {
  flex: 1;
  min-width: 0;
  padding: 0 2px;
  border: 0;
  border-left: 1px solid #bbb;
  outline: 0;
  background: #fff;
  font: inherit;
}
.field button {
  width: 10px;
  border-left: 1px solid #aaa;
}
.field button svg {
  width: 8px;
  height: 8px;
  fill: none;
  stroke: #555;
}
.actions {
  display: grid;
  grid-template-rows: 15px 15px;
  grid-template-columns: 49px 48px;
  gap: 1px;
}
.actions button {
  gap: 8px;
  border: 1px solid #bbb;
}
.actions button:disabled {
  border-color: #ddd;
  background: #eff0f0;
  color: #888;
}
.actions svg {
  width: 11px;
  height: 11px;
  fill: none;
}
.status {
  display: flex;
  align-items: center;
  height: 23px;
  padding: 0 0 3px 5px;
}
.lab {
  width: 17px;
}
.val {
  width: 47px;
}
.val + .lab {
  width: 18px;
}
.val + .lab + .val {
  width: 44px;
}
.photos {
  display: flex;
  flex: 343 1 0;
  flex-direction: column;
  min-width: 0;
  border-right: 1px solid #777;
  background: #fdfdfd;
}
.photo-title {
  display: flex;
  align-items: center;
  height: 21px;
  padding-left: 7px;
}
.photo-tools {
  display: flex;
  align-items: center;
  height: 32px;
}
.photo-tools button {
  width: 33px;
  height: 32px;
}
.photo-tools svg {
  width: 14px;
  height: 14px;
  fill: none;
  stroke: #444;
}
.photo-tools .see {
  width: 45px;
  margin-right: 6px;
  background: #1088f4;
}
.photo-tools .see svg {
  width: 12px;
  height: 12px;
  stroke: none;
}
.photo-tools .plus {
  margin-right: 4px;
}
.photo-tools .edit {
  margin-left: 12px;
}
.photo-tools .drop {
  width: 6px;
  height: 6px;
  margin-left: -4px;
  stroke: #1084d8;
}
.photo-tools .more {
  margin-left: auto;
}
.photo-view {
  display: flex;
  position: relative;
  flex: 1;
  flex-direction: column;
  align-items: flex-end;
  min-height: 0;
  padding-top: 183px;
}
.plan {
  width: 330px;
  height: 250px;
}
.thin {
  fill: none;
  stroke: #ccc;
  stroke-width: 2px;
}
.axis {
  stroke: #c4b0b0;
  stroke-dasharray: 18 8;
}
.outline {
  fill: none;
  stroke: #666;
  stroke-width: 2px;
}
.arrows {
  fill: #222;
}
.labels {
  fill: #222;
  font: 21px 'Open Sans', sans-serif;
}
.pale {
  fill: #bbb;
}
.brand {
  position: absolute;
  right: 0;
  bottom: 0;
  width: 230px;
  height: 166px;
}
.brand .big {
  font: 900 162px Lato, sans-serif;
}
.brand .design {
  fill: #cc0e78;
  font: 700 75px Lato, sans-serif;
}
</style>
